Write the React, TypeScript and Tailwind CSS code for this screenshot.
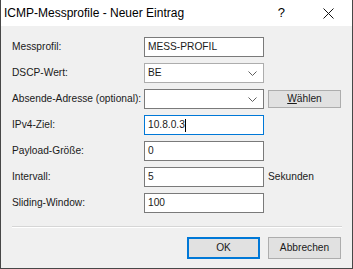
import React from 'react';

const font = { fontFamily: '"Liberation Sans", Arial, sans-serif' };

const inputBase = "h-[20px] w-[120px] border bg-white px-[3px] flex items-center text-[#1a1a1a]";

const Chevron: React.FC = () => (
  <svg width="9" height="5" viewBox="0 0 9 5" className="ml-auto mr-[3px]">
    <path d="M0.5 0.5 L4.5 4.5 L8.5 0.5" fill="none" stroke="#5f5f5f" strokeWidth="1" />
  </svg>
);

const Label: React.FC<{ text: string }> = ({ text }) => (
  <div className="h-[20px] flex items-center text-[#1a1a1a] whitespace-nowrap">{text}</div>
);

export default function App() {
  return (
    <div
      className="w-[353px] h-[269px] flex flex-col bg-[#f0f0f0] border-x border-b border-[#474747] overflow-hidden text-[10.2px]"
      style={font}
    >
      {/* title bar */}
      <div className="h-[26px] shrink-0 bg-white flex items-center pl-[3px]">
        <span className="text-[12px] text-black">ICMP-Messprofile - Neuer Eintrag</span>
        <span className="ml-auto text-[13px] text-black mr-[38px]">?</span>
        <svg width="11" height="11" viewBox="0 0 11 11" className="mr-[18px]">
          <path d="M0.5 0.5 L10.5 10.5 M10.5 0.5 L0.5 10.5" stroke="#111" strokeWidth="1" />
        </svg>
      </div>

      {/* form */}
      <div className="grid grid-cols-[128px_120px_1fr] gap-x-[4px] gap-y-[6px] pl-[11px] pt-[11px]">
        <Label text="Messprofil:" />
        <div className={`${inputBase} border-[#7a7a7a]`}>MESS-PROFIL</div>
        <div />

        <Label text="DSCP-Wert:" />
        <div className={`${inputBase} border-[#adadad] bg-[#e1e1e1]`}>
          BE
          <Chevron />
        </div>
        <div />

        <Label text="Absende-Adresse (optional):" />
        <div className={`${inputBase} border-[#7a7a7a]`}>
          <Chevron />
        </div>
        <div className="flex items-center">
          <button className="w-[73px] h-[18px] border border-[#adadad] bg-[#e1e1e1] text-[#1a1a1a] flex items-center justify-center">
            <span><span className="underline">W</span>ählen</span>
          </button>
        </div>

        <Label text="IPv4-Ziel:" />
        <div className={`${inputBase} border-[#0078d7]`}>
          10.8.0.3
          <span className="inline-block w-px h-[13px] bg-black" />
        </div>
        <div />

        <Label text="Payload-Größe:" />
        <div className={`${inputBase} border-[#7a7a7a]`}>0</div>
        <div />

        <Label text="Intervall:" />
        <div className={`${inputBase} border-[#7a7a7a]`}>5</div>
        <Label text="Sekunden" />

        <Label text="Sliding-Window:" />
        <div className={`${inputBase} border-[#7a7a7a]`}>100</div>
        <div />
      </div>

      {/* separator */}
      <div className="mt-[13px] ml-[11px] mr-[10px] h-[2px] border-t border-[#d6d6d6] border-b border-b-white" />

      {/* buttons */}
      <div className="flex justify-end gap-[8px] mt-[9px] pr-[11px]">
        <button className="w-[73px] h-[22px] border-2 border-[#0078d7] bg-[#e1e1e1] text-[#1a1a1a]">OK</button>
        <button className="w-[73px] h-[22px] border border-[#adadad] bg-[#e1e1e1] text-[#1a1a1a]">Abbrechen</button>
      </div>
    </div>
  );
}
